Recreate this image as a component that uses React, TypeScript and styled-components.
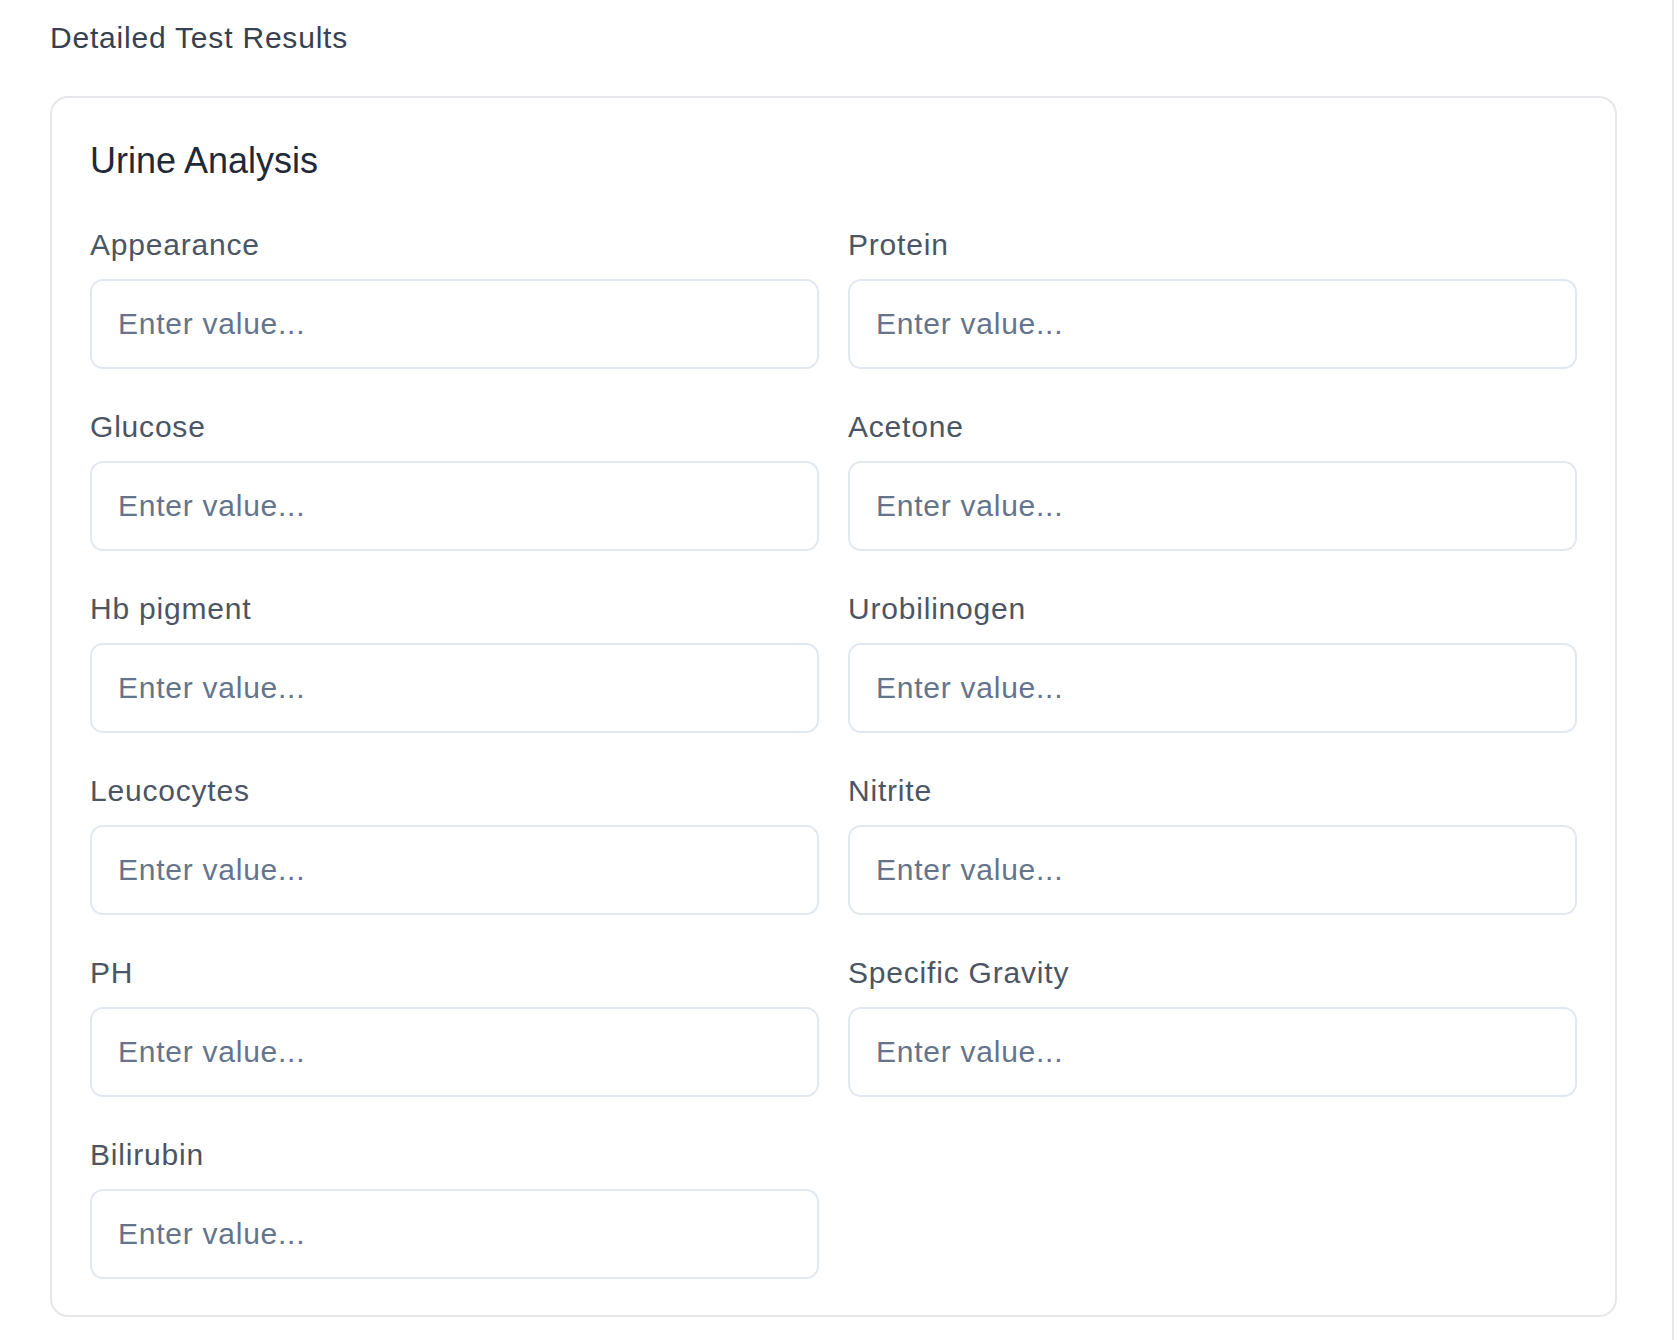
import styled, { createGlobalStyle } from "styled-components";

const GlobalStyle = createGlobalStyle`
    * { box-sizing: border-box; }
    body {
        margin: 0;
        background: #ffffff;
        font-family: "Liberation Sans", Arial, Helvetica, sans-serif;
    }
`

const fields = [
    "Appearance",
    "Protein",
    "Glucose",
    "Acetone",
    "Hb pigment",
    "Urobilinogen",
    "Leucocytes",
    "Nitrite",
    "PH",
    "Specific Gravity",
    "Bilirubin",
];

const App = () => {
    return (
        <Page>
            <GlobalStyle />
            <Heading>Detailed Test Results</Heading>
            <Card>
                <CardTitle>Urine Analysis</CardTitle>
                <FieldGrid>
                    {fields.map((name) => (
                        <Field key={name}>
                            <Label htmlFor={name}>{name}</Label>
                            <Input id={name} type="text" placeholder="Enter value..." />
                        </Field>
                    ))}
                </FieldGrid>
            </Card>
        </Page>
    )
}

const Page = styled.div`
    width: 1674px;
    min-height: 1340px;
    border-right: 2px solid #e5e7eb;
    padding: 15px 55px 0 50px;
`

const Heading = styled.h2`
    margin: 0 0 36px;
    font-size: 30px;
    line-height: 45px;
    font-weight: 400;
    letter-spacing: 0.8px;
    color: #374151;
`

const Card = styled.section`
    border: 2px solid #e5e7eb;
    border-radius: 18px;
    padding: 36px 38px 36px;
    background: #ffffff;
`

const CardTitle = styled.h3`
    margin: 0 0 34px;
    font-size: 36px;
    line-height: 54px;
    font-weight: 400;
    color: #1f2937;
`

const FieldGrid = styled.div`
    display: grid;
    grid-template-columns: 1fr 1fr;
    column-gap: 29px;
    row-gap: 35px;
`

const Field = styled.div`
    display: flex;
    flex-direction: column;
`

const Label = styled.label`
    font-size: 30px;
    line-height: 45px;
    letter-spacing: 0.8px;
    color: #4b5563;
    margin-bottom: 12px;
`

const Input = styled.input`
    height: 90px;
    width: 100%;
    padding: 0 26px;
    border: 2px solid #e2e8f0;
    border-radius: 13px;
    font-family: inherit;
    font-size: 30px;
    letter-spacing: 0.75px;
    color: #1f2937;
    background: #ffffff;
    outline: none;

    &::placeholder {
        color: #64748b;
    }
`

export default App;
